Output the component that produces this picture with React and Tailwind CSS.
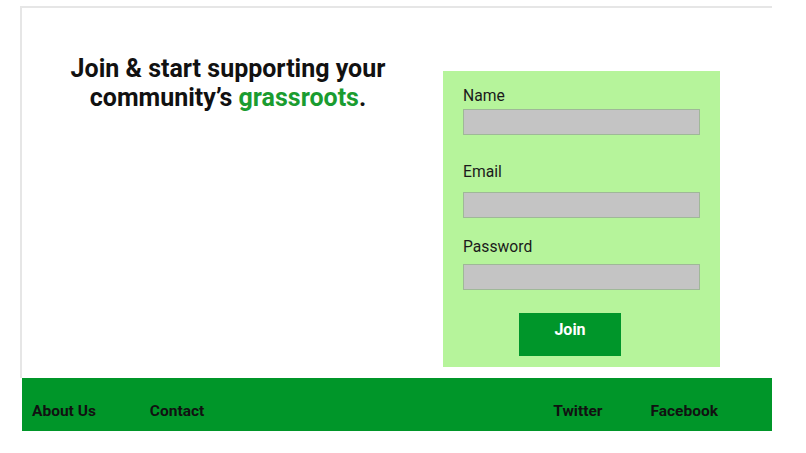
export default function App() {
  const font = { fontFamily: "Roboto, 'Liberation Sans', sans-serif" };
  return (
    <div className="w-[806px] h-[453px] bg-white pt-[6px]" style={font}>
      <div className="ml-[20px] w-[752px]">
        <div className="flex h-[372px] border-l-2 border-t-2 border-[#e6e6e6]">
          <div className="w-[412px] pt-[46px] flex justify-center">
            <h1 className="text-[25px] leading-[29px] font-bold text-[#111] text-center whitespace-nowrap">
              Join &amp; start supporting your
              <br />
              community’s <span className="text-[#1a9c30]">grassroots</span>.
            </h1>
          </div>
          <div className="ml-[9px] mt-[63px] w-[277px] h-[296px] bg-[#b6f49b] px-[20px] pt-[16px] flex flex-col">
            <label className="text-[15.7px] leading-[18px] text-[#1b1b1b]">Name</label>
            <div className="mt-[4px] h-[26px] bg-[#c4c4c4] border border-[#9fb898]"></div>
            <label className="mt-[28px] text-[15.7px] leading-[18px] text-[#1b1b1b]">Email</label>
            <div className="mt-[11px] h-[26px] bg-[#c4c4c4] border border-[#9fb898]"></div>
            <label className="mt-[20px] text-[15.7px] leading-[18px] text-[#1b1b1b]">Password</label>
            <div className="mt-[8px] h-[26px] bg-[#c4c4c4] border border-[#9fb898]"></div>
            <button className="mt-[23px] ml-[56px] w-[102px] h-[43px] bg-[#00962a] text-white font-bold text-[16px] leading-[18px] pb-[10px]">
              Join
            </button>
          </div>
        </div>
        <footer className="ml-[2px] h-[53px] bg-[#009629] flex pt-[24px] text-[15.5px] leading-[18px] font-bold text-[#111]">
          <span className="ml-[10px]">About Us</span>
          <span className="ml-[54px]">Contact</span>
          <span className="ml-auto">Twitter</span>
          <span className="ml-[48px] mr-[54px]">Facebook</span>
        </footer>
      </div>
    </div>
  );
}
